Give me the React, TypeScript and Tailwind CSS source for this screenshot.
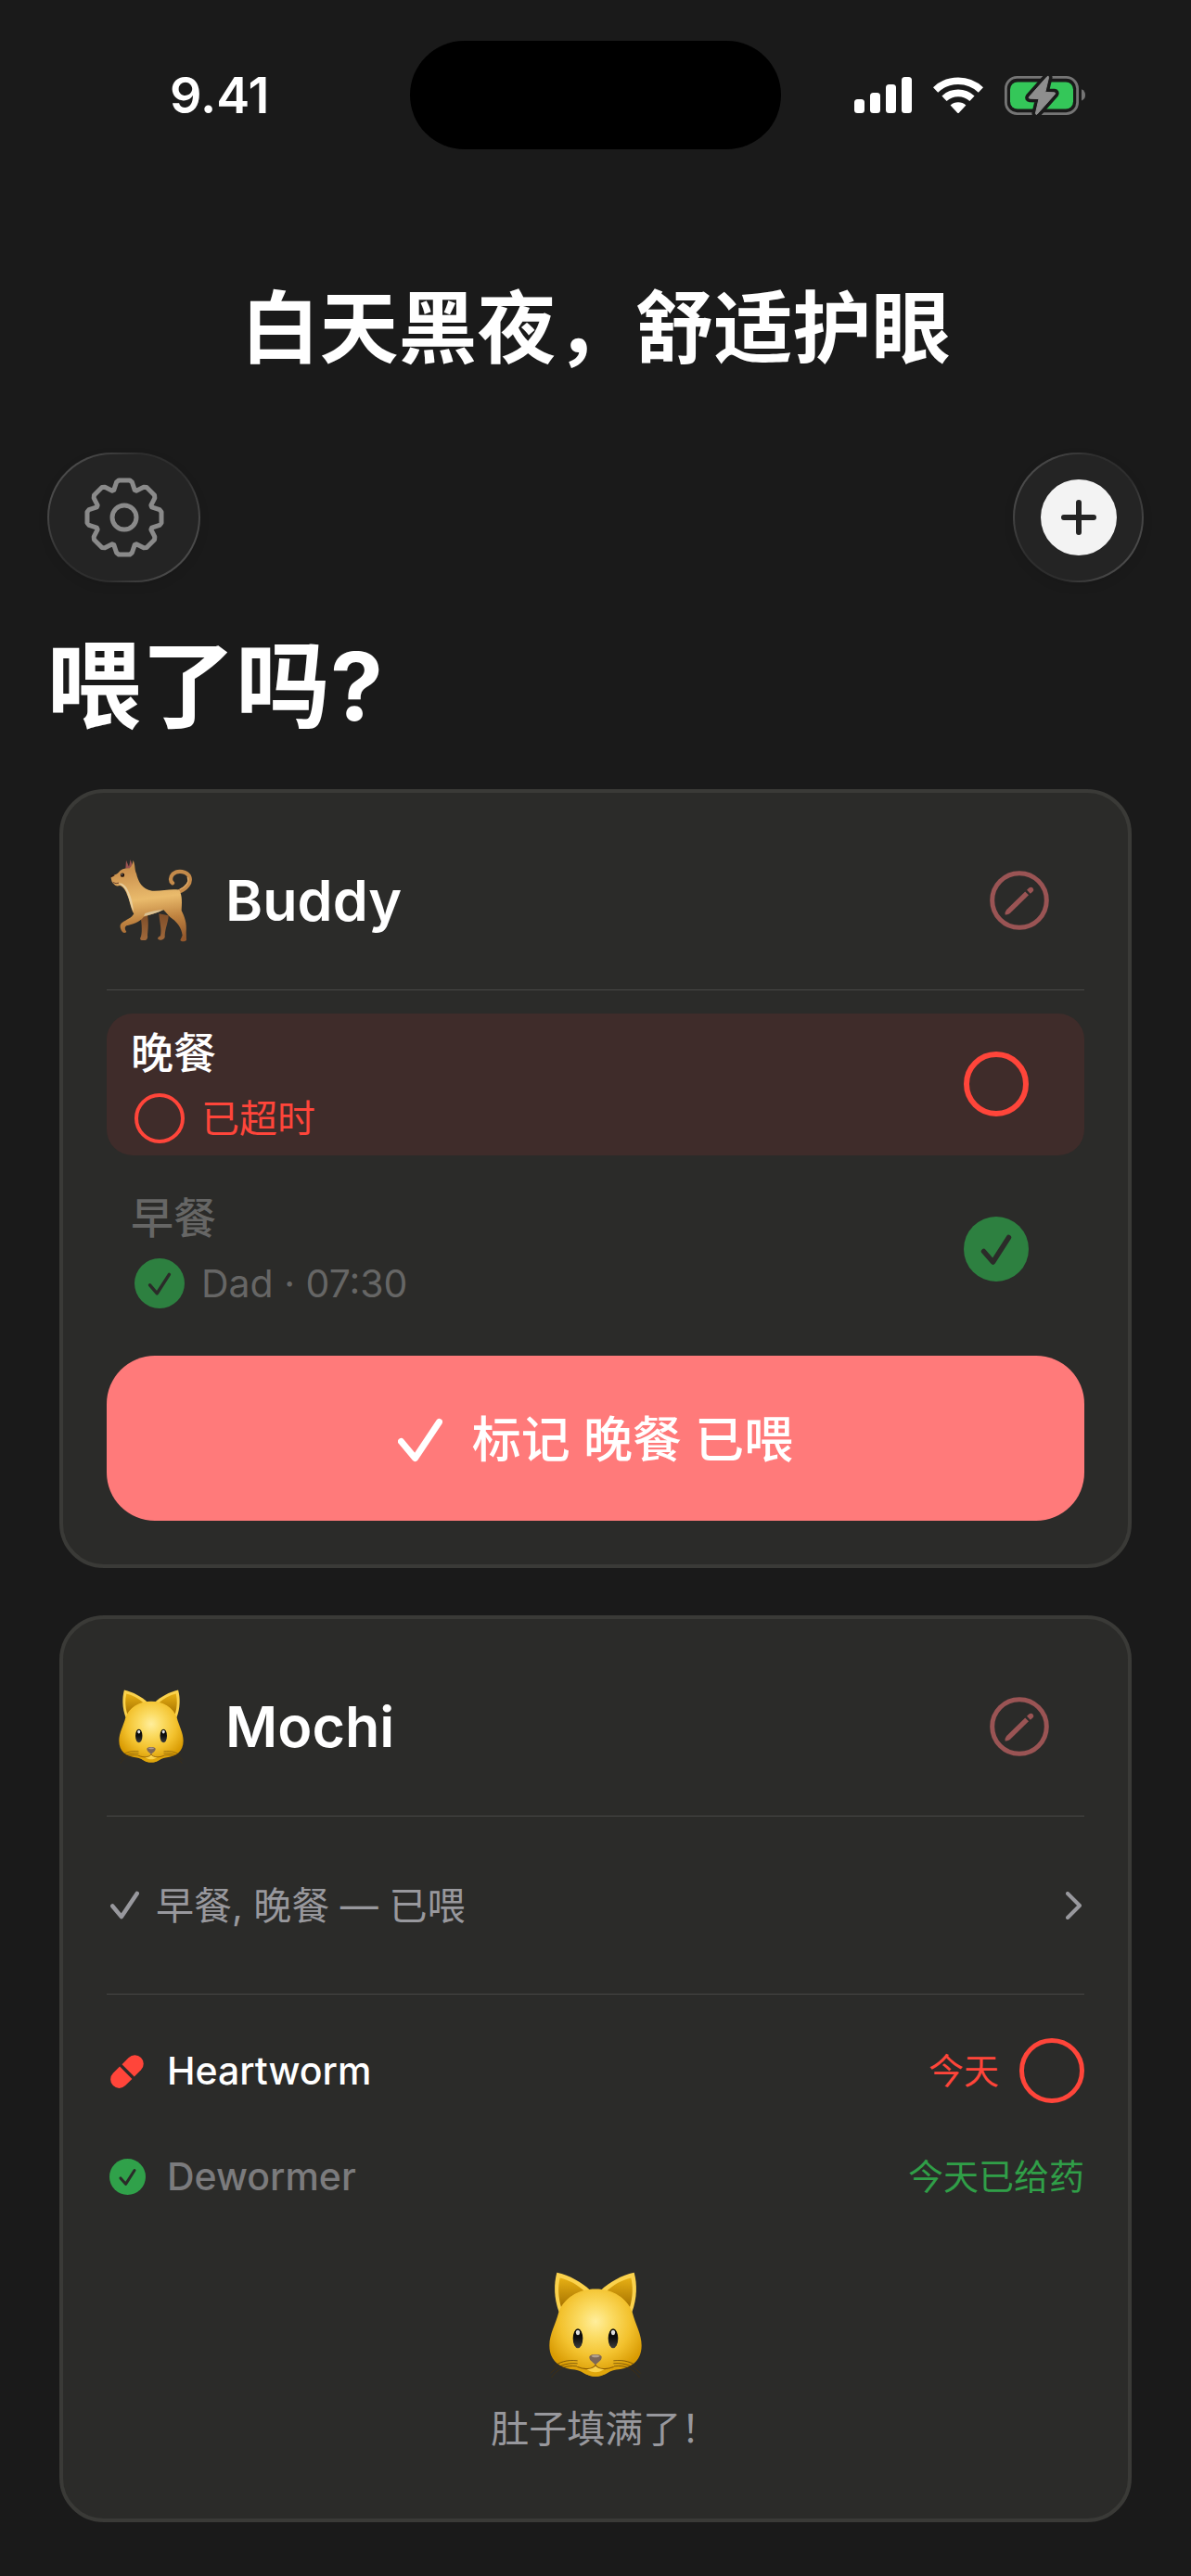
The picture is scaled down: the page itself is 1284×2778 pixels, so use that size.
import { useId } from "react";
import type { ReactNode } from "react";

function SignalIcon() {
  return (
    <svg width="62" height="39" viewBox="0 0 62 39" fill="#fff" aria-hidden="true">
      <rect x="0" y="24" width="11" height="15" rx="3.5" />
      <rect x="17" y="17" width="11" height="22" rx="3.5" />
      <rect x="34" y="8" width="11" height="31" rx="3.5" />
      <rect x="51" y="0" width="11" height="39" rx="3.5" />
    </svg>
  );
}

function WifiIcon() {
  return (
    <svg width="54" height="40" viewBox="0 0 54 40" fill="none" aria-hidden="true">
      <path d="M2.6 13.9A35.5 35.5 0 0 1 51.4 13.9" stroke="#fff" strokeWidth="7.6" />
      <path d="M12 23.3A22 22 0 0 1 42 23.3" stroke="#fff" strokeWidth="7.6" />
      <path d="M18.6 30.6A12.5 12.5 0 0 1 35.4 30.6L28 38.4Q27 39.4 26 38.4Z" fill="#fff" />
    </svg>
  );
}

function BatteryIcon() {
  const bolt = "M46 .6L26.4 22.6Q25.5 24 27.2 24.2L37 24.6L33.4 40.4Q33.8 42.2 35.2 41L54.4 19.4Q55.4 18 53.6 17.8L43.8 17.4L47.6 1.4Q47.4-.6 46 .6Z";
  return (
    <svg width="88" height="42" viewBox="0 0 88 42" fill="none" className="overflow-visible" aria-hidden="true">
      <rect x="1.4" y="1.4" width="77.2" height="39.2" rx="12" stroke="#757575" strokeWidth="2.8" />
      <rect x="6" y="6.4" width="68" height="29.2" rx="8" fill="#34c759" />
      <path d="M83 14.2Q87 16 87 20.5T83 26.6Z" fill="#757575" />
      <path d={bolt} fill="#1a1a1a" stroke="#1a1a1a" strokeWidth="8" strokeLinejoin="round" />
      <path d={bolt} fill="#8e8e8e" stroke="#8e8e8e" strokeLinejoin="round" />
    </svg>
  );
}

function gearOutline() {
  const tooth: [number, number][] = [
    [-11.2, -29.6],
    [-8.4, -38],
    [-6, -40],
    [6, -40],
    [8.4, -38],
    [11.2, -29.6],
  ];
  const points: string[] = [];
  for (let i = 0; i < 8; i++) {
    const a = (i * Math.PI) / 4;
    for (const [x, y] of tooth) {
      const px = 43 + x * Math.cos(a) - y * Math.sin(a);
      const py = 43 + x * Math.sin(a) + y * Math.cos(a);
      points.push(`${px.toFixed(2)} ${py.toFixed(2)}`);
    }
  }
  return `M${points.join("L")}Z`;
}

function GearIcon() {
  return (
    <svg width="86" height="86" viewBox="0 0 86 86" fill="none" stroke="#8a8a8a" strokeWidth="5" strokeLinejoin="round" aria-hidden="true">
      <path d={gearOutline()} />
      <circle cx="43" cy="43" r="13" />
    </svg>
  );
}

function PlusIcon() {
  return (
    <svg width="82" height="82" viewBox="0 0 82 82" aria-hidden="true">
      <circle cx="41" cy="41" r="41" fill="#f3f3f3" />
      <path d="M41 25V57M25 41H57" stroke="#242424" strokeWidth="6" strokeLinecap="round" />
    </svg>
  );
}

function PencilCircleIcon() {
  return (
    <svg width="64" height="64" viewBox="0 0 64 64" fill="none" aria-hidden="true">
      <circle cx="32" cy="32" r="29.3" stroke="#9a5454" strokeWidth="5" />
      <path d="M16.6 47.4Q16.2 44.4 18.2 42L38.2 22.4L42 26.2L21.8 46Q19.6 47.8 16.6 47.4Z" fill="#9a5454" />
      <path d="M40 20.8L42.4 18.6Q44.6 17 46.6 18.8Q48.2 20.8 46.2 22.8L43.8 24.8Z" fill="#9a5454" />
    </svg>
  );
}

function CheckCircle({ size, color, thin }: { size: number; color: string; thin?: boolean }) {
  return (
    <svg width={size} height={size} viewBox="0 0 70 70" fill="none" aria-hidden="true">
      <circle cx="35" cy="35" r="35" fill={color} />
      <path d="M21.5 37.5L31.5 49L48.5 22.5" stroke="#2b2b29" strokeWidth={thin ? 4.5 : 5.5} strokeLinecap="round" strokeLinejoin="round" />
    </svg>
  );
}

function Ring({ size, width }: { size: number; width: number }) {
  return (
    <svg width={size} height={size} viewBox={`0 0 ${size} ${size}`} fill="none" aria-hidden="true">
      <circle cx={size / 2} cy={size / 2} r={(size - width) / 2} stroke="#ff453a" strokeWidth={width} />
    </svg>
  );
}

function CheckMark({ size, width }: { size: number; width: number }) {
  return (
    <svg width={size} height={size} viewBox="0 0 48 48" fill="none" stroke="currentColor" strokeWidth={width} strokeLinecap="round" strokeLinejoin="round" aria-hidden="true">
      <path d="M3.5 25.5L18.5 43.5L44.5 4.5" />
    </svg>
  );
}

function PillIcon() {
  return (
    <svg width="38" height="38" viewBox="0 0 38 38" aria-hidden="true">
      <g transform="rotate(-45 19 19)" fill="#ff453a">
        <path d="M17.8 9.6V28.4H7.6A9.4 9.4 0 0 1 7.6 9.6Z" transform="translate(-2 0)" />
        <path d="M20.2 9.6V28.4H30.4A9.4 9.4 0 0 0 30.4 9.6Z" transform="translate(-1 0)" />
      </g>
    </svg>
  );
}

function Dog() {
  const id = useId();
  return (
    <svg width="88" height="90" viewBox="210 292 264 270" fill="none" role="img" aria-label="狗">
      <defs>
        <linearGradient id={`${id}a`} x1="320" y1="320" x2="350" y2="560" gradientUnits="userSpaceOnUse">
          <stop offset="0" stopColor="#c98f4d" />
          <stop offset=".42" stopColor="#eabb6c" />
          <stop offset=".7" stopColor="#bf8340" />
          <stop offset="1" stopColor="#94582c" />
        </linearGradient>
        <linearGradient id={`${id}b`} x1="0" y1="460" x2="0" y2="560" gradientUnits="userSpaceOnUse">
          <stop offset="0" stopColor="#7a4a26" />
          <stop offset="1" stopColor="#a26a3c" />
        </linearGradient>
      </defs>
      <path d="M307 478L330 472C334 500 332 520 330 540C332 548 328 556 320 556C312 557 304 556 307 548C314 538 312 500 307 478Z" fill={`url(#${id}b)`} />
      <path d="M367 470L398 476C398 495 388 515 386 540C388 550 380 555 370 555C360 554 362 546 372 542C377 520 369 500 367 470Z" fill={`url(#${id}b)`} />
      <path d="M432 398C456 390 472 370 466 352C459 332 428 328 412 342C402 352 404 366 411 371" stroke="#c48a4a" strokeWidth="13" strokeLinecap="round" />
      <path d="M436 391C456 382 466 366 460 353" stroke="#e0ab68" strokeWidth="4" strokeLinecap="round" />
      <path d="M259 324L261 297L270 318L275 295L284 322Z" fill="#9b5350" />
      <path d="M212 355C212 347 228 345 236 337C244 326 258 322 272 323C280 316 282 306 284 297C291 313 288 328 294 340C300 365 312 392 345 396C375 398 405 388 432 393C444 410 441 440 440 460C450 480 458 500 455 530L456 556C450 561 440 561 436 556L443 540C440 515 425 498 412 488C400 480 390 466 382 458C360 468 335 475 318 480C305 498 280 504 262 509C254 514 258 522 262 529C258 533 252 532 249 529C239 516 240 504 248 499C262 489 280 484 286 470C276 455 274 430 264 408C257 388 247 380 240 379C232 382 224 379 221 374C214 370 214 362 212 355Z" fill={`url(#${id}a)`} />
      <path d="M236 372C247 376 258 386 264 402C273 428 276 448 285 464C283 440 276 408 262 386C254 375 246 370 236 372Z" fill="#e8cfa0" />
      <path d="M318 478C340 474 362 468 381 457C364 458 340 462 322 469Z" fill="#d9c194" />
      <circle cx="249" cy="345" r="6.5" fill="#22150f" />
      <circle cx="247" cy="343" r="1.6" fill="#fff" />
      <path d="M211 347Q216 343 224 346Q219 351 213 352Z" fill="#2a1a16" />
      <path d="M219 369Q229 375 236 371" stroke="#69402a" strokeWidth="3" strokeLinecap="round" />
    </svg>
  );
}

function Cat({ width, height }: { width: number; height: number }) {
  const id = useId();
  return (
    <svg width={width} height={height} viewBox="423 150 300 344" fill="none" role="img" aria-label="猫">
      <defs>
        <radialGradient id={`${id}h`} cx="573" cy="310" r="175" gradientUnits="userSpaceOnUse">
          <stop offset="0" stopColor="#ffee9c" />
          <stop offset=".3" stopColor="#fbdb62" />
          <stop offset=".65" stopColor="#f3c22e" />
          <stop offset="1" stopColor="#d99b03" />
        </radialGradient>
        <linearGradient id={`${id}e`} x1="0" y1="165" x2="0" y2="262" gradientUnits="userSpaceOnUse">
          <stop offset="0" stopColor="#e9b215" />
          <stop offset="1" stopColor="#a87400" />
        </linearGradient>
        <linearGradient id={`${id}y`} x1="0" y1="334" x2="0" y2="396" gradientUnits="userSpaceOnUse">
          <stop offset="0" stopColor="#000" />
          <stop offset=".5" stopColor="#111" />
          <stop offset="1" stopColor="#3d3d3d" />
        </linearGradient>
        <g id={`${id}s`}>
          <path d="M448 152C490 161 528 184 554 207L455 280C438 235 438 188 448 152Z" fill="#fbd24c" />
          <path d="M458 169C488 175 514 192 537 211C503 220 479 238 462 264C452 230 451 198 458 169Z" fill={`url(#${id}e)`} />
        </g>
        <g id={`${id}w`} stroke="#4a3008" strokeWidth="2.5" strokeOpacity=".75">
          <path d="M515 437C480 433 455 442 438 456" />
          <path d="M515 446C475 442 445 458 427 478" />
          <path d="M513 455C475 449 448 466 430 492" />
        </g>
      </defs>
      <use href={`#${id}s`} />
      <use href={`#${id}s`} transform="translate(1146 0) scale(-1 1)" />
      <path d="M573 205C630 205 675 235 692 280C702 320 722 350 722 388C722 436 690 462 640 466C612 470 602 488 573 488C544 488 534 470 506 466C456 462 424 436 424 388C424 350 444 320 454 280C471 235 516 205 573 205Z" fill={`url(#${id}h)`} />
      <path d="M515 457C535 467 560 466 573 452C586 466 611 467 631 457C617 477 596 488 573 488C550 488 529 477 515 457Z" fill="#e0a60c" />
      <path d="M543 463C560 462 568 457 573 450C578 457 586 462 603 463C592 472 583 474 573 474C563 474 554 472 543 463Z" fill="#fbd24a" />
      <path d="M515 457C535 466 562 466 573 451C584 466 611 466 631 457" stroke="#8a5a05" strokeWidth="3.5" strokeLinecap="round" />
      <use href={`#${id}w`} />
      <use href={`#${id}w`} transform="translate(1146 0) scale(-1 1)" />
      <ellipse cx="516" cy="365" rx="16" ry="31.5" fill={`url(#${id}y)`} />
      <ellipse cx="630" cy="365" rx="16" ry="31.5" fill={`url(#${id}y)`} />
      <ellipse cx="516" cy="346" rx="6.5" ry="8" fill="#ddd" />
      <ellipse cx="630" cy="346" rx="6.5" ry="8" fill="#ddd" />
      <path d="M553 424C555 414 591 414 593 424C594 436 582 440 573 451C564 440 552 436 553 424Z" fill="#7d6757" />
      <path d="M559 422C566 417 580 417 587 422C582 428 564 428 559 422Z" fill="#b3a08e" />
    </svg>
  );
}

function GlassButton({ label, wide, children }: { label: string; wide?: boolean; children: ReactNode }) {
  return (
    <button
      type="button"
      aria-label={label}
      className={`${wide ? "w-[165px]" : "w-[141px]"} h-[140px] rounded-full bg-[linear-gradient(125deg,#4a4a4a_15%,#2e2e2e_38%,#2e2e2e_62%,#4a4a4a_85%)] p-[2px] shadow-[0_4px_12px_rgba(0,0,0,0.08)]`}
    >
      <span className="flex size-full items-center justify-center rounded-full bg-[#242424]">{children}</span>
    </button>
  );
}

function Card({ name, avatar, children }: { name: string; avatar: ReactNode; children: ReactNode }) {
  return (
    <section className="rounded-[48px] border-4 border-[#3a3a37] bg-[#2b2b29] p-[47px]">
      <header className="flex h-[138px] items-center">
        <span className="flex w-24 shrink-0 justify-center">{avatar}</span>
        <h3 className="ml-8 flex-1 text-[61px] leading-[76px] font-semibold">{name}</h3>
        <button type="button" aria-label={`编辑 ${name}`} className="flex h-full w-[140px] items-center justify-center">
          <PencilCircleIcon />
        </button>
      </header>
      <hr className="mt-[27px] border-t border-[#484846]" />
      {children}
    </section>
  );
}

function MealRow({ name, detail, done }: { name: string; detail: string; done?: boolean }) {
  return (
    <label className={`flex items-center justify-between rounded-[28px] pt-3 pr-[60px] pb-[13px] pl-[26px] ${done ? "text-[#666665]" : "bg-[#3f2c2a]"}`}>
      <span className="flex flex-col gap-3.5">
        <span className="text-[46px] leading-[60px] font-medium">{name}</span>
        <span className={`flex h-[54px] items-center gap-[18px] pl-1 text-[41px] leading-[54px] ${done ? "" : "text-[#ff453a]"}`}>
          {done ? <CheckCircle size={54} color="#2d8040" thin /> : <Ring size={54} width={4} />}
          {detail}
        </span>
      </span>
      <input type="checkbox" defaultChecked={done} className="sr-only" />
      {done ? <CheckCircle size={70} color="#2d8040" /> : <Ring size={70} width={6} />}
    </label>
  );
}

export default function App() {
  return (
    <div className="min-h-screen bg-[#1a1a1a] pb-[57px] font-['Inter','Noto_Sans_CJK_SC',sans-serif] text-white" lang="zh-CN">
      <div className="grid grid-cols-[1fr_400px_1fr] items-center pt-11">
        <div className="pl-[183px] text-[54px] leading-[64px] font-semibold">9.41</div>
        <div className="h-[117px] rounded-full bg-black" />
        <div className="flex items-center gap-[23px] pl-[79px]">
          <SignalIcon />
          <WifiIcon />
          <BatteryIcon />
        </div>
      </div>

      <h1 className="mt-[133px] text-center text-[85px] leading-[122px] font-bold">白天黑夜，舒适护眼</h1>

      <nav className="mt-[72px] flex justify-between px-[51px]">
        <GlassButton label="设置" wide>
          <GearIcon />
        </GlassButton>
        <GlassButton label="添加">
          <PlusIcon />
        </GlassButton>
      </nav>

      <h2 className="mt-[42px] px-[50px] text-[102px] leading-[140px] font-bold">喂了吗?</h2>

      <main className="mt-[41px] flex flex-col gap-[51px] px-16">
        <Card name="Buddy" avatar={<Dog />}>
          <div className="mt-[25px] flex flex-col gap-[25px]">
            <MealRow name="晚餐" detail="已超时" />
            <MealRow name="早餐" detail="Dad · 07:30" done />
          </div>
          <button type="button" className="mt-[38px] flex h-[178px] w-full items-center justify-center gap-8 rounded-[52px] bg-[#ff7a7a] pt-1 text-[53px] leading-[70px] font-medium">
            <CheckMark size={48} width={7} />
            标记 晚餐 已喂
          </button>
        </Card>

        <Card name="Mochi" avatar={<Cat width={70} height={80} />}>
          <button type="button" className="flex h-[191px] w-full items-center justify-between pr-[3px] pl-1 text-[#98989d]">
            <span className="flex items-center gap-[18px] text-[41px] leading-[54px]">
              <CheckMark size={31} width={7} />
              早餐, 晚餐 — 已喂
            </span>
            <svg width="17" height="30" viewBox="0 0 17 30" fill="none" stroke="currentColor" strokeWidth="4" strokeLinecap="round" strokeLinejoin="round" aria-hidden="true">
              <path d="M2 2L15 15L2 28" />
            </svg>
          </button>
          <hr className="border-t border-[#484846]" />
          <ul className="mt-[47px] flex flex-col gap-[52px]">
            <li>
              <label className="flex h-[70px] items-center">
                <span className="ml-[3px] flex w-[39px] justify-center">
                  <PillIcon />
                </span>
                <span className="ml-[23px] flex-1 text-[41px] leading-[54px] font-medium">Heartworm</span>
                <span className="text-[38px] leading-[54px] text-[#ff453a]">今天</span>
                <input type="checkbox" className="sr-only" />
                <span className="ml-[22px]">
                  <Ring size={70} width={5} />
                </span>
              </label>
            </li>
            <li className="flex h-[54px] items-center">
              <span className="ml-[3px]">
                <CheckCircle size={39} color="#30a14a" />
              </span>
              <span className="ml-[23px] flex-1 text-[41px] leading-[54px] font-medium text-[#7b7b7d]">Dewormer</span>
              <span className="text-[38px] leading-[54px] text-[#309f48]">今天已给药</span>
            </li>
          </ul>
          <div className="mt-[76px] flex flex-col items-center gap-[27px] pb-[23px]">
            <Cat width={100} height={115} />
            <p className="text-[41px] leading-[54px] text-[#98989d] [font-feature-settings:'halt']">肚子填满了！</p>
          </div>
        </Card>
      </main>
    </div>
  );
}
